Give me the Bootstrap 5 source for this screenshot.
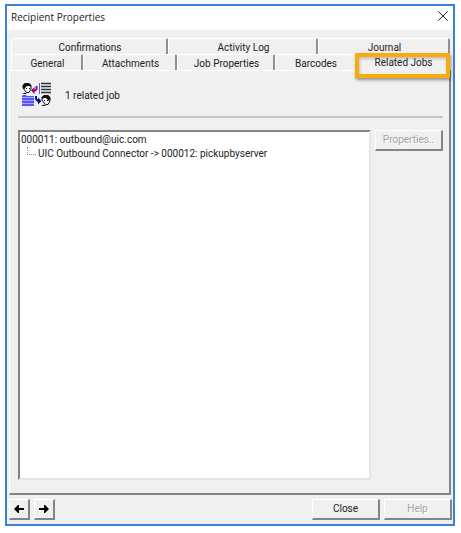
<!DOCTYPE html>
<html lang="en">
<head>
<meta charset="utf-8">
<meta name="viewport" content="width=device-width, initial-scale=1">
<title>Recipient Properties</title>
<link href="https://cdn.jsdelivr.net/npm/bootstrap@5.3.0/dist/css/bootstrap.min.css" rel="stylesheet">
<style>
body { font: 10px/14px Roboto, "Liberation Sans", Arial, sans-serif; color: #222; background: #fff; padding: 4px 6px 7px 5px; }
.dialog-frame { border: 2px solid #3c80d8; background: #f0f0f0; }
.title-strip { height: 24px; background: #fff; padding: 0 4px; font: 10px/14px "Open Sans", "Noto Sans", sans-serif; }
.title-strip span { margin-top: -3px; }
.close-x { width: 12px; height: 12px; margin-top: -4px; }
.dialog-main { padding: 8px 2px 4px; }
.tab-rows { margin: 0 1px 0 2px; }
.tab-line { display: grid; height: 16px; }
.tab-line-back { grid-template-columns: 157fr 150fr 132fr; }
.tab-line-front { grid-template-columns: 72fr 94fr 98fr 81fr 94fr; }
.prop-tab { border: 0; border-top: 1px solid #fff; border-left: 1px solid #fff; border-right: 2px solid #909090; border-radius: 2px 2px 0 0; background: #f0f0f0; color: #222; padding: 2px 0 0 2px; white-space: nowrap; line-height: 14px; }
.tab-line-front .prop-tab:nth-child(4) { border-right-color: #f0f0f0; }
.prop-tab.active { position: relative; border-color: #f0f0f0; padding: 0 0 1px 2px; }
.prop-tab.active::after { content: ""; position: absolute; inset: -2px -2px -7px -2px; border: 4px solid #f9aa0c; box-shadow: 1px 2px 3px #0006, inset 1px 2px 3px #0003; }
.prop-sheet { border: 2px solid #858585; border-top: 1px solid #fff; border-left: 1px solid #fff; padding: 11px 6px 13px 8px; }
.summary-line { height: 36px; padding: 0 0 9px 4px; gap: 14px; border-bottom: 2px solid #c6c6c6; margin-bottom: 12px; }
.summary-line span { padding-top: 2px; }
.job-box { background: #fff; border: 2px solid #858585; border-right-color: #e6e6e6; border-bottom-color: #e6e6e6; padding: 1px; }
.job-box ul { padding-left: 6px; }
.job-box ul li { display: flex; gap: 2px; }
.tree-elbow { width: 9px; height: 8px; border-left: 1px dotted #888; border-bottom: 1px dotted #888; }
.push-btn { height: 21px; padding: 0; border: 1px solid #fff; border-right: 2px solid #858585; border-bottom: 2px solid #858585; background: #f0f0f0; color: #222; line-height: 14px; width: 68px; }
.push-btn:disabled { color: #a2a2a2; text-shadow: 1px 1px #fff; }
.push-btn-arrow { width: 21px; }
.footer-line { padding: 0 1px 4px 2px; }
</style>
<script src="https://cdn.jsdelivr.net/npm/bootstrap@5.3.0/dist/js/bootstrap.bundle.min.js"></script>
</head>
<body class="min-vh-100 d-flex flex-column">
<div class="dialog-frame flex-grow-1 d-flex flex-column" role="dialog" aria-labelledby="dialogTitle">
  <header class="title-strip d-flex justify-content-between align-items-center">
    <span id="dialogTitle">Recipient Properties</span>
    <button type="button" class="close-x border-0 bg-transparent p-0 d-flex align-items-center justify-content-center" aria-label="Close window">
      <svg width="10" height="10" viewBox="0 0 10 10" stroke="#222" stroke-width="1"><path d="M.5.5l9 9M9.500.5l-9 9"/></svg>
    </button>
  </header>
  <main class="dialog-main flex-grow-1 d-flex flex-column">
    <div class="tab-rows" role="tablist">
      <div class="tab-line tab-line-back" role="presentation">
        <button class="prop-tab" role="tab" type="button">Confirmations</button>
        <button class="prop-tab" role="tab" type="button">Activity Log</button>
        <button class="prop-tab" role="tab" type="button">Journal</button>
      </div>
      <div class="tab-line tab-line-front" role="presentation">
        <button class="prop-tab" role="tab" type="button">General</button>
        <button class="prop-tab" role="tab" type="button">Attachments</button>
        <button class="prop-tab" role="tab" type="button">Job Properties</button>
        <button class="prop-tab" role="tab" type="button">Barcodes</button>
        <button class="prop-tab active" role="tab" type="button" aria-selected="true">Related Jobs</button>
      </div>
    </div>
    <section class="prop-sheet flex-grow-1 d-flex flex-column" role="tabpanel">
      <div class="summary-line d-flex align-items-center">
        <svg width="29" height="25" viewBox="0 0 29 25" fill="none" aria-hidden="true">
          <path d="M2.500 8L1 6V3.500L3 1.500h4l2 2V7L7 10.500H4.500z" fill="#f4f4f4" stroke="#111"/>
          <path d="M1 6V3l2-2h4l2 2v2L7 4H5L3 6v1zM0 12l3-1.500L5 12zM4 6h1v1H4zM7 6h1v1H7z" fill="#111"/>
          <path d="M14.500 4v3l-1.500 1.500h-3" stroke="#8b0a8b" stroke-width="2"/><path d="M9 8.500L12.500 5v7z" fill="#8b0a8b"/>
          <path d="M17.500 1v11" stroke="#5757f5"/>
          <path d="M19 1.500h10M19 4.500h10M19 7.500h10M19 10.500h10" stroke="#333" stroke-width="1.500"/>
          <path d="M0 15V14l1-1h3l1 1h7v10H0z" fill="#5555fa"/>
          <path d="M0 15.500h12M0 18.500h12M0 21.500h12" stroke="#a5a5ff"/>
          <path d="M14 14v3l2 2h2" stroke="#10108a" stroke-width="2"/><path d="M19.500 19L16 15.500v7z" fill="#10108a"/>
          <path d="M21.500 20L20 18v-2.500l2-2h4l2 2V19l-2 3.500h-2.500z" fill="#f4f4f4" stroke="#111"/>
          <path d="M28 18v-3l-2-2h-4l-2 2v2l2-1h2l2 2v1zM19 24l3-1.500 2 1.500zM22 18h1v1h-1zM25 18h1v1h-1z" fill="#111"/>
        </svg>
        <span>1 related job</span>
      </div>
      <div class="flex-grow-1 d-flex gap-1">
        <div class="job-box flex-grow-1">
          <div>000011: outbound@uic.com</div>
          <ul class="list-unstyled mb-0">
            <li><span class="tree-elbow"></span><span>UIC Outbound Connector -&gt; 000012: pickupbyserver</span></li>
          </ul>
        </div>
        <button type="button" class="push-btn flex-shrink-0" disabled>Properties..</button>
      </div>
    </section>
  </main>
  <footer class="footer-line d-flex">
    <button type="button" class="push-btn push-btn-arrow d-flex align-items-center justify-content-center" aria-label="Previous">
      <svg width="10" height="8" viewBox="0 0 10 8"><path d="M0 4l4-4h1v3h5v2H5v3H4z"/></svg>
    </button>
    <button type="button" class="push-btn push-btn-arrow ms-1 d-flex align-items-center justify-content-center" aria-label="Next">
      <svg width="10" height="8" viewBox="0 0 10 8"><path d="M10 4L6 0H5v3H0v2h5v3h1z"/></svg>
    </button>
    <button type="button" class="push-btn ms-auto">Close</button>
    <button type="button" class="push-btn ms-1" disabled>Help</button>
  </footer>
</div>
</body>
</html>
